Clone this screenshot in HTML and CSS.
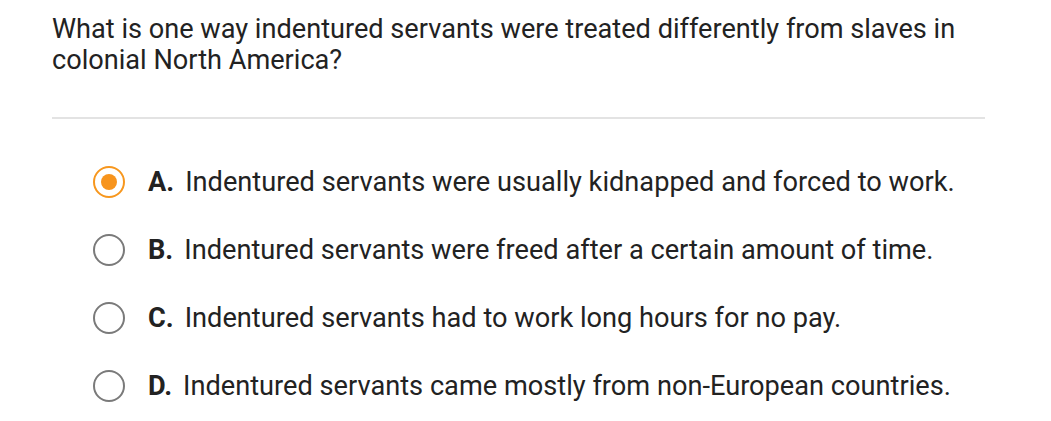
FILE: index.html
```html
<!DOCTYPE html>
<html>
<head>
<meta charset="utf-8">
<link rel="stylesheet" href="styles.css">
</head>
<body>
<div class="quiz">
  <div class="question">What is one way indentured servants were treated differently from slaves in colonial North America?</div>
  <hr class="divider">
  <ul class="options">
    <li class="option selected"><span class="radio"></span><span class="letter">A.</span><span class="text">Indentured servants were usually kidnapped and forced to work.</span></li>
    <li class="option"><span class="radio"></span><span class="letter">B.</span><span class="text">Indentured servants were freed after a certain amount of time.</span></li>
    <li class="option"><span class="radio"></span><span class="letter">C.</span><span class="text">Indentured servants had to work long hours for no pay.</span></li>
    <li class="option"><span class="radio"></span><span class="letter">D.</span><span class="text">Indentured servants came mostly from non-European countries.</span></li>
  </ul>
</div>
</body>
</html>
```

FILE: styles.css
```css
html, body {
  margin: 0;
  padding: 0;
  background: #ffffff;
}
body {
  font-family: Roboto, "Liberation Sans", sans-serif;
  color: #222222;
}
.quiz {
  padding: 14px 66px 0 52px;
}
.question {
  font-size: 27.15px;
  line-height: 31px;
  width: 933px;
}
.divider {
  border: 0;
  height: 2px;
  background: #e3e3e3;
  margin: 41px 0 0 0;
}
.options {
  list-style: none;
  margin: 47px 0 0 0;
  padding: 0 0 0 41px;
  display: flex;
  flex-direction: column;
  gap: 36px;
}
.option {
  display: flex;
  align-items: center;
  height: 32px;
  font-size: 27.2px;
}
.radio {
  box-sizing: border-box;
  width: 32px;
  height: 32px;
  border: 2px solid #7a7a7a;
  border-radius: 50%;
  flex: none;
  display: flex;
  align-items: center;
  justify-content: center;
  margin-right: 23px;
}
.selected .radio {
  border-color: #f7971e;
}
.selected .radio::after {
  content: "";
  width: 16px;
  height: 16px;
  border-radius: 50%;
  background: #f7941d;
}
.letter {
  font-weight: 700;
  margin-right: 11px;
}
```
